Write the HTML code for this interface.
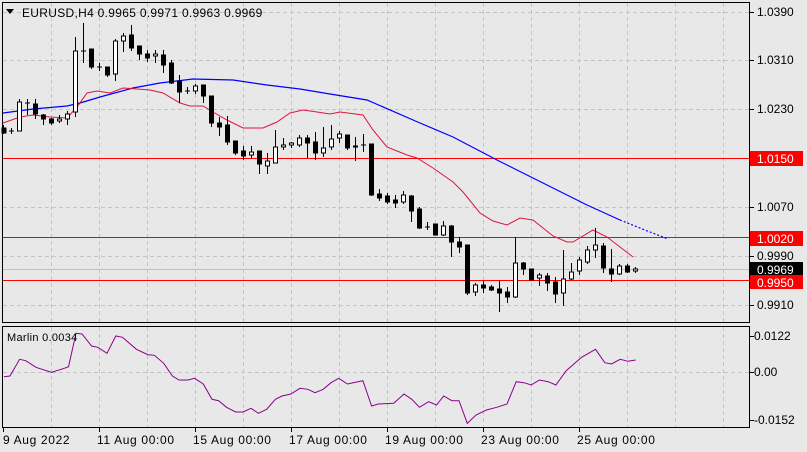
<!DOCTYPE html>
<html><head><meta charset="utf-8"><style>
html,body{margin:0;padding:0;background:#e8e8e8;width:807px;height:452px;overflow:hidden}
svg{display:block;font-family:"Liberation Sans","DejaVu Sans",sans-serif}
</style></head><body>
<svg width="807" height="452" viewBox="0 0 807 452">
<rect width="807" height="452" fill="#e8e8e8"/>
<g stroke="#c4c4c4" stroke-dasharray="4,3" stroke-width="1">
<line x1="51.5" y1="3" x2="51.5" y2="322"/><line x1="99.5" y1="3" x2="99.5" y2="322"/><line x1="147.5" y1="3" x2="147.5" y2="322"/><line x1="195.5" y1="3" x2="195.5" y2="322"/><line x1="243.5" y1="3" x2="243.5" y2="322"/><line x1="291.5" y1="3" x2="291.5" y2="322"/><line x1="339.5" y1="3" x2="339.5" y2="322"/><line x1="387.5" y1="3" x2="387.5" y2="322"/><line x1="435.5" y1="3" x2="435.5" y2="322"/><line x1="483.5" y1="3" x2="483.5" y2="322"/><line x1="531.5" y1="3" x2="531.5" y2="322"/><line x1="579.5" y1="3" x2="579.5" y2="322"/><line x1="627.5" y1="3" x2="627.5" y2="322"/><line x1="675.5" y1="3" x2="675.5" y2="322"/><line x1="723.5" y1="3" x2="723.5" y2="322"/>
<line x1="3" y1="12.5" x2="749" y2="12.5"/><line x1="3" y1="60.5" x2="749" y2="60.5"/><line x1="3" y1="109.5" x2="749" y2="109.5"/><line x1="3" y1="207.5" x2="749" y2="207.5"/><line x1="3" y1="256.5" x2="749" y2="256.5"/><line x1="3" y1="305.5" x2="749" y2="305.5"/>
<line x1="51.5" y1="327" x2="51.5" y2="427"/><line x1="99.5" y1="327" x2="99.5" y2="427"/><line x1="147.5" y1="327" x2="147.5" y2="427"/><line x1="195.5" y1="327" x2="195.5" y2="427"/><line x1="243.5" y1="327" x2="243.5" y2="427"/><line x1="291.5" y1="327" x2="291.5" y2="427"/><line x1="339.5" y1="327" x2="339.5" y2="427"/><line x1="387.5" y1="327" x2="387.5" y2="427"/><line x1="435.5" y1="327" x2="435.5" y2="427"/><line x1="483.5" y1="327" x2="483.5" y2="427"/><line x1="531.5" y1="327" x2="531.5" y2="427"/><line x1="579.5" y1="327" x2="579.5" y2="427"/><line x1="627.5" y1="327" x2="627.5" y2="427"/><line x1="675.5" y1="327" x2="675.5" y2="427"/><line x1="723.5" y1="327" x2="723.5" y2="427"/>
<line x1="3" y1="372.5" x2="749" y2="372.5"/>
</g>
<line x1="3" y1="269.5" x2="749" y2="269.5" stroke="#c0c0c0"/>
<g stroke="#ff0000" stroke-width="1">
<line x1="3" y1="158.5" x2="749" y2="158.5"/><line x1="3" y1="237.5" x2="749" y2="237.5"/><line x1="3" y1="280.5" x2="749" y2="280.5"/>
</g>
<polyline fill="none" stroke="#0000ff" stroke-width="1.2" points="3,113 33,109 67,106 80,103 100,97 133,88 160,83 193,79 233,80 267,85 300,89 330,94 367,100 420,123 453,137 497,160 553,188 587,205 620,220"/>
<polyline fill="none" stroke="#0000ff" stroke-width="1.2" stroke-dasharray="2,2" points="620,220 650,232 668,239"/>
<polyline fill="none" stroke="#e0143c" stroke-width="1" points="3,123 20,117 33,115 50,117 67,118 77,107 87,93 97,91 110,93 123,88 137,89 150,90 163,93 180,103 190,106 203,106 213,112 227,120 243,128 263,128 277,122 290,113 303,110 317,112 330,114 340,112 363,115 373,130 387,147 407,155 417,158 433,168 453,182 463,192 480,213 493,221 507,225 520,218 533,220 553,236 567,242 573,242 593,230 607,237 620,247 633,257"/>
<g stroke="#000" stroke-width="1" shape-rendering="crispEdges">
<line x1="3.5" y1="125" x2="3.5" y2="134"/><rect x="2" y="128" width="4" height="5" fill="#000"/>
<line x1="11.5" y1="128" x2="11.5" y2="134"/><line x1="9" y1="131" x2="14" y2="131"/>
<line x1="19.5" y1="99" x2="19.5" y2="131"/><rect x="17.5" y="102" width="4" height="29" fill="#fff"/>
<line x1="27.5" y1="99" x2="27.5" y2="115"/><line x1="25" y1="103" x2="30" y2="103"/>
<line x1="35.5" y1="99" x2="35.5" y2="119"/><rect x="33.5" y="104" width="4" height="10" fill="#000"/>
<line x1="43.5" y1="114" x2="43.5" y2="125"/><rect x="41.5" y="115" width="4" height="4" fill="#000"/>
<line x1="51.5" y1="118" x2="51.5" y2="125"/><rect x="49.5" y="119" width="4" height="4" fill="#000"/>
<line x1="59.5" y1="115" x2="59.5" y2="123"/><rect x="57.5" y="119" width="4" height="2" fill="#fff"/>
<line x1="67.5" y1="111" x2="67.5" y2="125"/><rect x="65.5" y="114" width="4" height="5" fill="#fff"/>
<line x1="75.5" y1="37" x2="75.5" y2="117"/><rect x="73.5" y="51" width="4" height="61" fill="#fff"/>
<line x1="83.5" y1="23" x2="83.5" y2="63"/><line x1="81" y1="51" x2="86" y2="51"/>
<line x1="91.5" y1="49" x2="91.5" y2="69"/><rect x="89.5" y="49" width="4" height="18" fill="#000"/>
<line x1="99.5" y1="63" x2="99.5" y2="71"/><line x1="97" y1="67" x2="102" y2="67"/>
<line x1="107.5" y1="67" x2="107.5" y2="77"/><rect x="105.5" y="67" width="4" height="8" fill="#000"/>
<line x1="115.5" y1="39" x2="115.5" y2="81"/><rect x="113.5" y="41" width="4" height="33" fill="#fff"/>
<line x1="123.5" y1="33" x2="123.5" y2="52"/><rect x="121.5" y="36" width="4" height="5" fill="#fff"/>
<line x1="131.5" y1="25" x2="131.5" y2="51"/><rect x="129.5" y="35" width="4" height="13" fill="#000"/>
<line x1="139.5" y1="46" x2="139.5" y2="60"/><rect x="137.5" y="46" width="4" height="8" fill="#000"/>
<line x1="147.5" y1="50" x2="147.5" y2="62"/><rect x="145.5" y="54" width="4" height="4" fill="#000"/>
<line x1="155.5" y1="50" x2="155.5" y2="63"/><rect x="153.5" y="54" width="4" height="2" fill="#fff"/>
<line x1="163.5" y1="50" x2="163.5" y2="73"/><rect x="161.5" y="55" width="4" height="10" fill="#000"/>
<line x1="171.5" y1="60" x2="171.5" y2="84"/><rect x="169.5" y="63" width="4" height="20" fill="#000"/>
<line x1="179.5" y1="75" x2="179.5" y2="103"/><rect x="177.5" y="81" width="4" height="11" fill="#000"/>
<line x1="187.5" y1="87" x2="187.5" y2="94"/><line x1="185" y1="91" x2="190" y2="91"/>
<line x1="195.5" y1="84" x2="195.5" y2="94"/><rect x="193.5" y="86" width="4" height="5" fill="#fff"/>
<line x1="203.5" y1="85" x2="203.5" y2="103"/><rect x="201.5" y="85" width="4" height="11" fill="#000"/>
<line x1="211.5" y1="96" x2="211.5" y2="127"/><rect x="209.5" y="96" width="4" height="27" fill="#000"/>
<line x1="219.5" y1="117" x2="219.5" y2="136"/><rect x="217.5" y="123" width="4" height="4" fill="#000"/>
<line x1="227.5" y1="116" x2="227.5" y2="145"/><rect x="225.5" y="125" width="4" height="17" fill="#000"/>
<line x1="235.5" y1="141" x2="235.5" y2="155"/><rect x="233.5" y="141" width="4" height="12" fill="#000"/>
<line x1="243.5" y1="146" x2="243.5" y2="160"/><rect x="241.5" y="151" width="4" height="5" fill="#000"/>
<line x1="251.5" y1="146" x2="251.5" y2="158"/><rect x="249.5" y="152" width="4" height="3" fill="#fff"/>
<line x1="259.5" y1="151" x2="259.5" y2="174"/><rect x="257.5" y="151" width="4" height="13" fill="#000"/>
<line x1="267.5" y1="153" x2="267.5" y2="174"/><rect x="265.5" y="161" width="4" height="5" fill="#fff"/>
<line x1="275.5" y1="130" x2="275.5" y2="163"/><rect x="273.5" y="147" width="4" height="16" fill="#fff"/>
<line x1="283.5" y1="138" x2="283.5" y2="150"/><rect x="281.5" y="145" width="4" height="2" fill="#fff"/>
<line x1="291.5" y1="142" x2="291.5" y2="148"/><rect x="289.5" y="143" width="4" height="2" fill="#fff"/>
<line x1="299.5" y1="135" x2="299.5" y2="147"/><rect x="297.5" y="138" width="4" height="7" fill="#fff"/>
<line x1="307.5" y1="135" x2="307.5" y2="158"/><rect x="305.5" y="138" width="4" height="5" fill="#000"/>
<line x1="315.5" y1="132" x2="315.5" y2="160"/><rect x="313.5" y="142" width="4" height="11" fill="#000"/>
<line x1="323.5" y1="127" x2="323.5" y2="157"/><rect x="321.5" y="148" width="4" height="5" fill="#fff"/>
<line x1="331.5" y1="125" x2="331.5" y2="150"/><rect x="329.5" y="139" width="4" height="8" fill="#fff"/>
<line x1="339.5" y1="131" x2="339.5" y2="143"/><rect x="337.5" y="134" width="4" height="4" fill="#fff"/>
<line x1="347.5" y1="135" x2="347.5" y2="150"/><rect x="345.5" y="135" width="4" height="13" fill="#000"/>
<line x1="355.5" y1="137" x2="355.5" y2="161"/><rect x="353.5" y="146" width="4" height="1" fill="#000"/>
<line x1="363.5" y1="134" x2="363.5" y2="152"/><line x1="361" y1="145" x2="366" y2="145"/>
<line x1="371.5" y1="144" x2="371.5" y2="196"/><rect x="369.5" y="144" width="4" height="51" fill="#000"/>
<line x1="379.5" y1="189" x2="379.5" y2="201"/><rect x="377.5" y="194" width="4" height="4" fill="#000"/>
<line x1="387.5" y1="193" x2="387.5" y2="204"/><rect x="385.5" y="196" width="4" height="6" fill="#000"/>
<line x1="395.5" y1="195" x2="395.5" y2="208"/><rect x="393.5" y="200" width="4" height="3" fill="#000"/>
<line x1="403.5" y1="191" x2="403.5" y2="204"/><rect x="401.5" y="195" width="4" height="7" fill="#fff"/>
<line x1="411.5" y1="195" x2="411.5" y2="222"/><rect x="409.5" y="196" width="4" height="15" fill="#000"/>
<line x1="419.5" y1="207" x2="419.5" y2="229"/><rect x="417.5" y="209" width="4" height="19" fill="#000"/>
<line x1="427.5" y1="222" x2="427.5" y2="230"/><line x1="425" y1="227" x2="430" y2="227"/>
<line x1="435.5" y1="224" x2="435.5" y2="235"/><rect x="433.5" y="224" width="4" height="11" fill="#000"/>
<line x1="443.5" y1="221" x2="443.5" y2="236"/><rect x="441.5" y="226" width="4" height="9" fill="#fff"/>
<line x1="451.5" y1="225" x2="451.5" y2="257"/><rect x="449.5" y="226" width="4" height="16" fill="#000"/>
<line x1="459.5" y1="237" x2="459.5" y2="253"/><rect x="457.5" y="242" width="4" height="5" fill="#000"/>
<line x1="467.5" y1="245" x2="467.5" y2="295"/><rect x="465.5" y="245" width="4" height="48" fill="#000"/>
<line x1="475.5" y1="283" x2="475.5" y2="296"/><rect x="473.5" y="285" width="4" height="7" fill="#fff"/>
<line x1="483.5" y1="281" x2="483.5" y2="293"/><rect x="481.5" y="285" width="4" height="3" fill="#000"/>
<line x1="491.5" y1="285" x2="491.5" y2="291"/><rect x="489.5" y="287" width="4" height="3" fill="#000"/>
<line x1="499.5" y1="281" x2="499.5" y2="312"/><rect x="497.5" y="289" width="4" height="4" fill="#000"/>
<line x1="507.5" y1="287" x2="507.5" y2="303"/><rect x="505.5" y="292" width="4" height="5" fill="#000"/>
<line x1="515.5" y1="237" x2="515.5" y2="298"/><rect x="513.5" y="263" width="4" height="34" fill="#fff"/>
<line x1="523.5" y1="262" x2="523.5" y2="275"/><rect x="521.5" y="263" width="4" height="6" fill="#000"/>
<line x1="531.5" y1="269" x2="531.5" y2="280"/><rect x="529.5" y="269" width="4" height="11" fill="#000"/>
<line x1="539.5" y1="273" x2="539.5" y2="286"/><rect x="537.5" y="275" width="4" height="3" fill="#fff"/>
<line x1="547.5" y1="273" x2="547.5" y2="291"/><rect x="545.5" y="276" width="4" height="7" fill="#000"/>
<line x1="555.5" y1="277" x2="555.5" y2="303"/><rect x="553.5" y="282" width="4" height="12" fill="#000"/>
<line x1="563.5" y1="250" x2="563.5" y2="306"/><rect x="561.5" y="279" width="4" height="14" fill="#fff"/>
<line x1="571.5" y1="263" x2="571.5" y2="280"/><rect x="569.5" y="272" width="4" height="7" fill="#fff"/>
<line x1="579.5" y1="257" x2="579.5" y2="275"/><rect x="577.5" y="260" width="4" height="11" fill="#fff"/>
<line x1="587.5" y1="246" x2="587.5" y2="264"/><rect x="585.5" y="250" width="4" height="12" fill="#fff"/>
<line x1="595.5" y1="228" x2="595.5" y2="258"/><rect x="593.5" y="245" width="4" height="5" fill="#fff"/>
<line x1="603.5" y1="243" x2="603.5" y2="273"/><rect x="601.5" y="246" width="4" height="22" fill="#000"/>
<line x1="611.5" y1="249" x2="611.5" y2="282"/><rect x="609.5" y="269" width="4" height="5" fill="#000"/>
<line x1="619.5" y1="264" x2="619.5" y2="275"/><rect x="617.5" y="266" width="4" height="8" fill="#fff"/>
<line x1="627.5" y1="264" x2="627.5" y2="273"/><rect x="625.5" y="266" width="4" height="6" fill="#000"/>
<line x1="635.5" y1="267" x2="635.5" y2="273"/><rect x="633.5" y="269" width="4" height="2" fill="#fff"/>
</g>
<polyline fill="none" stroke="#8b008b" stroke-width="1" points="4,376.7 10,376 19.6,359.3 25.7,360.7 36,367.3 51.5,372.3 64.3,368.3 68.5,366.7 76,333.3 82,334 91.6,346 97.8,347.3 107,353.3 115.8,336 122.5,337.3 136.4,349.3 148,354.7 154.4,355.3 163.7,363.3 172.4,376 179,380 187.9,380 194.6,378.3 203.3,384 212,399.3 218.7,400.7 226.5,407.3 235.7,412 243,412 251,408.3 258.4,413.3 266.6,409.3 275.4,399.3 282,396 290.8,394 300,388.3 307.8,389.3 315,392.7 323.2,389.3 331,382.7 338.7,378.3 347.4,384 362.9,380.7 371.6,406 378.3,404 393.7,403.3 404,394 411.8,399.3 419.5,407.3 428.7,401.7 436.5,405 443.7,396 451.9,400.7 459,400.7 467.3,423.3 476,415 486.4,410 496.7,407.3 507,404 516.2,381.7 524,382.7 531.2,385 539.4,380 548.2,381.7 555.9,385 566.2,370.7 581.6,357.3 595.5,349.3 604.8,362.7 611.5,364 620.2,359.3 628,361.3 635.7,360"/>
<g fill="none" stroke="#000" stroke-width="1" shape-rendering="crispEdges">
<rect x="2.5" y="2.5" width="747" height="320"/>
<rect x="2.5" y="326.5" width="747" height="101"/>
</g>
<g stroke="#000" shape-rendering="crispEdges">
<line x1="750" y1="12.5" x2="754" y2="12.5"/><line x1="750" y1="60.5" x2="754" y2="60.5"/><line x1="750" y1="109.5" x2="754" y2="109.5"/><line x1="750" y1="207.5" x2="754" y2="207.5"/><line x1="750" y1="256.5" x2="754" y2="256.5"/><line x1="750" y1="305.5" x2="754" y2="305.5"/>
<line x1="750" y1="336.5" x2="754" y2="336.5"/><line x1="750" y1="372.5" x2="754" y2="372.5"/><line x1="750" y1="420.5" x2="754" y2="420.5"/>
<line x1="3.5" y1="428" x2="3.5" y2="432"/><line x1="99.5" y1="428" x2="99.5" y2="432"/><line x1="195.5" y1="428" x2="195.5" y2="432"/><line x1="291.5" y1="428" x2="291.5" y2="432"/><line x1="387.5" y1="428" x2="387.5" y2="432"/><line x1="483.5" y1="428" x2="483.5" y2="432"/><line x1="579.5" y1="428" x2="579.5" y2="432"/>
</g>
<rect x="750" y="151" width="53" height="15" fill="#ff0000"/>
<rect x="750" y="231" width="53" height="15" fill="#ff0000"/>
<rect x="750" y="262" width="53" height="14" fill="#000"/>
<rect x="750" y="275" width="53" height="14" fill="#ff0000"/>
<g font-size="12" fill="#000">
<text x="757" y="16">1.0390</text>
<text x="757" y="64">1.0310</text>
<text x="757" y="113">1.0230</text>
<text x="757" y="163" fill="#fff">1.0150</text>
<text x="757" y="211">1.0070</text>
<text x="757" y="243" fill="#fff">1.0020</text>
<text x="757" y="260">0.9990</text>
<text x="757" y="274" fill="#fff">0.9969</text>
<text x="757" y="287" fill="#fff">0.9950</text>
<text x="757" y="309">0.9910</text>
<text x="754" y="340">0.0122</text>
<text x="754" y="376">0.00</text>
<text x="754" y="424">-0.0152</text>
<g letter-spacing="0.65">
<text x="3" y="444">9 Aug 2022</text>
<text x="97" y="444">11 Aug 00:00</text>
<text x="193" y="444">15 Aug 00:00</text>
<text x="289" y="444">17 Aug 00:00</text>
<text x="385" y="444">19 Aug 00:00</text>
<text x="481" y="444">23 Aug 00:00</text>
<text x="577" y="444">25 Aug 00:00</text>
</g>
<text x="7" y="341" font-size="11" letter-spacing="0.3">Marlin 0.0034</text>
<text x="22" y="17" letter-spacing="0.3">EURUSD,H4  0.9965 0.9971 0.9963 0.9969</text>
</g>
<polygon points="6,9 14,9 10,14" fill="#000"/>
</svg>
</body></html>
